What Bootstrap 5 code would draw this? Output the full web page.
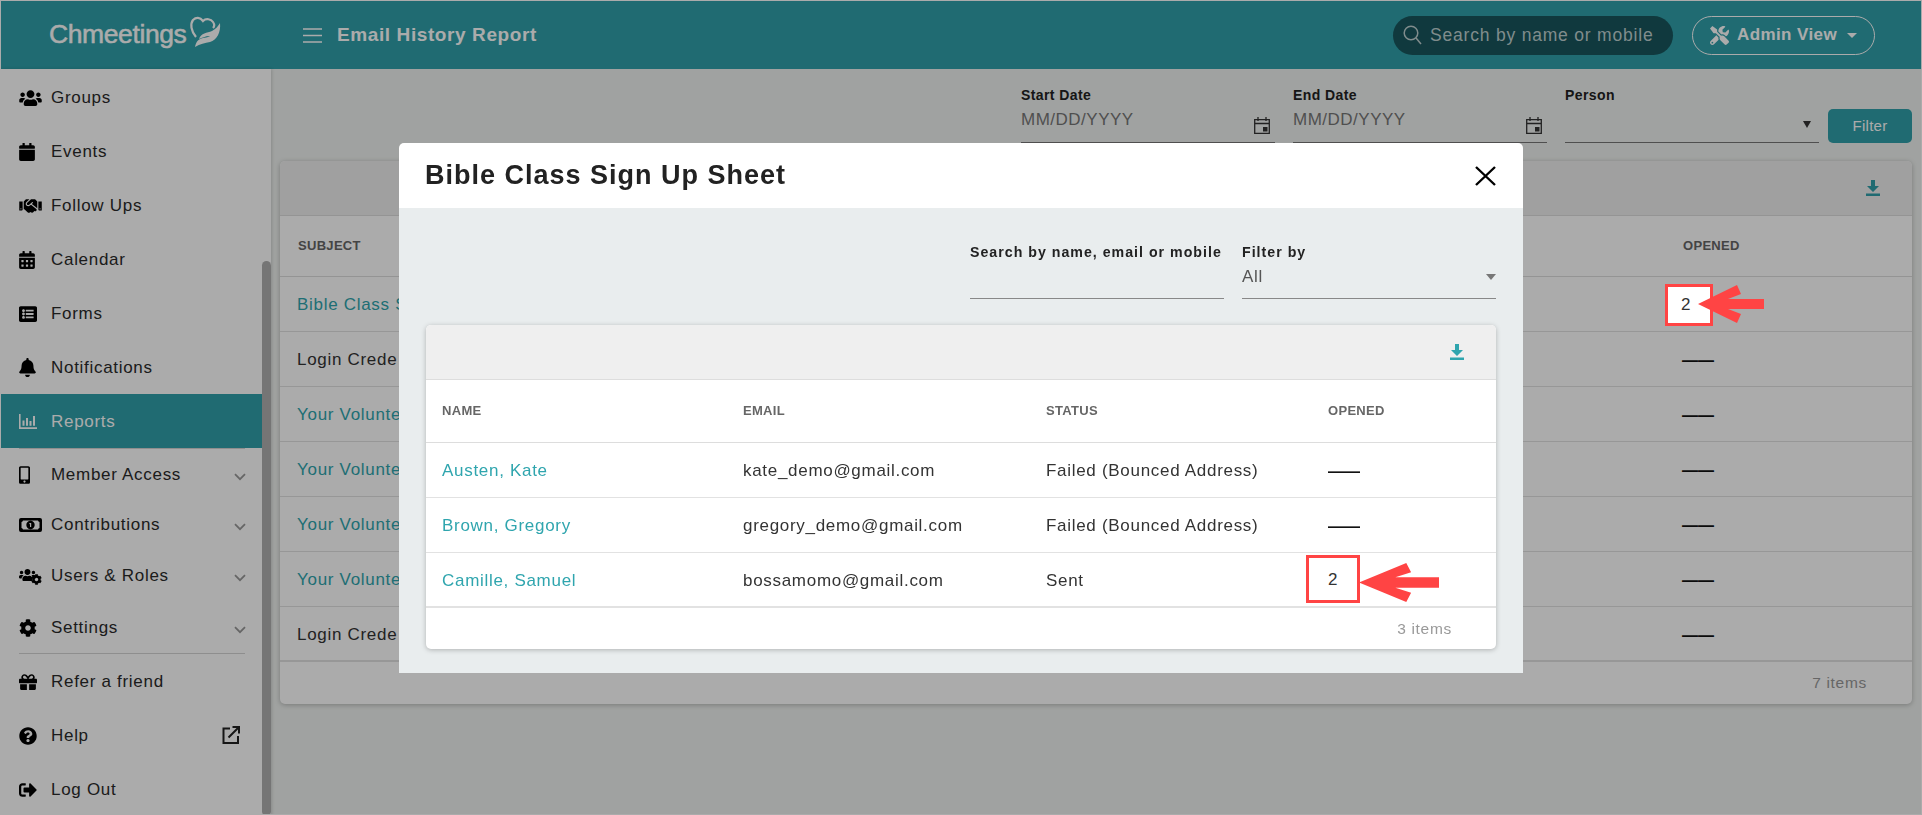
<!DOCTYPE html>
<html lang="en">
<head>
    <meta charset="UTF-8">
    <meta name="viewport" content="width=device-width, initial-scale=1.0">
    <title>Email History Report</title>
    <link href="https://cdn.jsdelivr.net/npm/bootstrap@5.3.0/dist/css/bootstrap.min.css" rel="stylesheet">
    <style>
        html, body { height: 100%; overflow: hidden; }
        body {
            background: #eff2f0;
            color: #333;
            font-family: "Liberation Sans", Arial, sans-serif;
            font-size: 17px;
            letter-spacing: .7px;
            border: 1px solid #fff;
            position: relative;
        }
        .app-top { height: 68px; background: #30a0aa; color: #fff; }
        .app-logo { width: 270px; padding-left: 48px; font-size: 26.5px; letter-spacing: -.4px; -webkit-text-stroke: .5px #fff; }
        .app-logo svg { margin-left: 3px; margin-top: -8px; }
        .app-title { font-size: 19px; font-weight: 700; margin-left: 15px; letter-spacing: .6px; }
        .app-burger { margin-left: 32px; }
        .app-search {
            width: 280px; height: 39px; background: #18555d; border-radius: 20px;
            padding-left: 10px; margin-right: 19px; gap: 8px;
        }
        .app-search input {
            background: none; border: 0; outline: 0; width: 240px; color: #fff;
            font-size: 17.5px; letter-spacing: .8px; padding: 0;
        }
        .app-search input::placeholder { color: #bfd1d1; opacity: 1; }
        .app-admin {
            width: 183px; height: 39px; border: 1px solid #fff; border-radius: 20px; color: #fff;
            font-size: 17px; font-weight: 700; margin-right: 46px; gap: 8px; letter-spacing: .4px;
        }
        .app-caret { border-left: 5px solid transparent; border-right: 5px solid transparent; border-top: 5px solid #fff; margin-left: 2px; }

        .app-side { width: 270px; background: #fff; position: relative; flex: none; box-shadow: 1px 0 3px rgba(0,0,0,.15); }
        .app-thumb { position: absolute; left: 261px; top: 192px; bottom: 0; width: 9px; background: #afafaf; border-radius: 5px; }
        .side-list { width: 261px; padding-top: 1px; }
        .side-item { height: 54px; color: #2b2b2b; padding-left: 18px; padding-top: 1px; }
        .side-item.short { height: 50px; }
        .side-item.mid { height: 52px; }
        .side-item.on { background: #30a0aa; color: #fff; }
        .side-ico { width: 32px; flex: none; display: flex; }
        .side-chev { position: absolute; right: 16px; top: 50%; margin-top: -1px; }
        .side-link { position: absolute; right: 22px; top: 18px; }
        .side-rule { height: 1px; background: #d4d4d4; margin: 0 17px 0 18px; }

        .app-main { padding: 17px 9px 0 9px; min-width: 0; }
        .flt-row { gap: 18px; }
        .flt-field { width: 254px; height: 57px; border-bottom: 1px solid #777; position: relative; }
        .flt-label { font-size: 14px; font-weight: 700; color: #222; line-height: 18px; display: block; letter-spacing: .4px; }
        .flt-value { font-size: 17px; color: #777; margin-top: 4px; line-height: 24px; letter-spacing: .5px; }
        .flt-ico { position: absolute; right: 5px; top: 31px; }
        .flt-drop { position: absolute; right: 8px; top: 35px; border-left: 4px solid transparent; border-right: 4px solid transparent; border-top: 7px solid #333; }
        .flt-btn {
            background: #30a0aa; color: #fff; border: 0; width: 84px; height: 34px; border-radius: 5px;
            font-size: 15px; margin-left: -9px; align-self: flex-end; padding: 0; letter-spacing: .3px;
        }

        .rpt-box { border: 0; border-radius: 5px; box-shadow: 0 1px 5px rgba(0,0,0,.25); background: #fff; }
        .app-main .rpt-box { margin-top: 18px; }
        .rpt-head { height: 55px; background: #efefef; border-radius: 5px 5px 0 0; border-bottom: 1px solid #ddd; padding-right: 32px; }
        .rpt-grid { margin: 0; table-layout: fixed; width: 100%; }
        .rpt-grid > thead th {
            height: 60px; font-size: 13px; font-weight: 700; color: #666; padding: 0 18px; vertical-align: middle;
            border-bottom: 1px solid #ddd; letter-spacing: .3px;
        }
        .inner-grid > thead th { height: 62px; }
        .rpt-grid > tbody td { height: 55px; padding: 2px 18px 0 17px; vertical-align: middle; border-bottom: 1px solid #e2e2e2; color: #333; background: none; }
        .rpt-grid > tbody tr:last-child td { border-bottom: 2px solid #e2e2e2; }
        .rpt-link { color: #2fa5ae; text-decoration: none; }
        .rpt-dash { font-weight: 700; font-size: 16px; color: #111; letter-spacing: 0; vertical-align: -2px; }
        .rpt-foot { height: 42px; padding-right: 45px; font-size: 15.5px; color: #999; }
        .inner-grid + .rpt-foot { height: 41px; padding-right: 44px; }

        .pop-dialog { max-width: 1124px; width: 1124px; margin: 143px auto 0; }
        .pop-content { border: 0; border-radius: 5px 5px 0 0; }
        .pop-head { height: 65px; padding: 0 27px 0 26px; border: 0; }
        .pop-title { font-size: 27px; font-weight: 700; color: #222; letter-spacing: 1px; margin: 0; }
        .pop-close { background: none; border: 0; padding: 0; line-height: 0; }
        .pop-body { background: #e9edee; padding: 31px 27px 24px; }
        .pop-flt { gap: 18px; height: 60px; margin-bottom: 26px; }
        .pop-field { width: 254px; height: 60px; padding-top: 2px; border-bottom: 1px solid #888; position: relative; }
        .pop-label { font-size: 14.2px; font-weight: 700; color: #222; line-height: 22px; display: block; letter-spacing: 1px; white-space: nowrap; }
        .pop-value { font-size: 17px; color: #555; line-height: 24px; margin-top: 2px; }
        .pop-drop { position: absolute; right: 0; top: 35px; border-left: 5.5px solid transparent; border-right: 5.5px solid transparent; border-top: 6px solid #777; }

        .mark-box {
            position: absolute; border: 3px solid #ff4444; background: #fff; color: #333;
            display: flex; align-items: center; justify-content: center; z-index: 1060;
        }
        .mark-arrow { position: absolute; z-index: 1061; }
        .mark-top { left: 1664px; top: 283px; width: 48px; height: 42px; padding-right: 6px; }
        .mark-top-arrow { left: 1697px; top: 284px; }
        .mark-cell { position: relative; }
        .mark-low { left: -22px; top: -25px; width: 54px; height: 48px; }
        .mark-low-arrow { left: 31px; top: -17px; }
    </style>
</head>
<body>
    <svg class="d-none">
        <symbol id="i-users" viewBox="0 0 640 512"><path d="M96 224c35.3 0 64-28.7 64-64s-28.7-64-64-64-64 28.7-64 64 28.7 64 64 64zm448 0c35.3 0 64-28.7 64-64s-28.7-64-64-64-64 28.7-64 64 28.7 64 64 64zm32 32h-64c-17.6 0-33.5 7.1-45.1 18.6 40.3 22.1 68.9 62 75.1 109.4h66c17.7 0 32-14.3 32-32v-32c0-35.3-28.7-64-64-64zm-256 0c61.9 0 112-50.1 112-112S381.9 32 320 32 208 82.1 208 144s50.1 112 112 112zm76.8 32h-8.3c-20.8 10-43.9 16-68.5 16s-47.6-6-68.5-16h-8.3C179.6 288 128 339.6 128 403.2V432c0 26.5 21.5 48 48 48h288c26.5 0 48-21.5 48-48v-28.8c0-63.6-51.6-115.2-115.2-115.2zm-223.7-13.4C161.5 263.1 145.6 256 128 256H64c-35.3 0-64 28.7-64 64v32c0 17.7 14.3 32 32 32h65.9c6.3-47.4 34.9-87.3 75.2-109.4z"/></symbol>
        <symbol id="i-cal" viewBox="0 0 448 512"><path d="M12 192h424c6.6 0 12 5.4 12 12v260c0 26.5-21.5 48-48 48H48c-26.5 0-48-21.5-48-48V204c0-6.6 5.4-12 12-12zm436-44v-36c0-26.5-21.5-48-48-48h-48V12c0-6.6-5.4-12-12-12h-40c-6.6 0-12 5.4-12 12v52H160V12c0-6.6-5.4-12-12-12h-40c-6.6 0-12 5.4-12 12v52H48C21.5 64 0 85.5 0 112v36c0 6.6 5.4 12 12 12h424c6.6 0 12-5.4 12-12z"/></symbol>
        <symbol id="i-hands" viewBox="0 0 640 512"><path d="M434.7 64h-85.9c-8 0-15.7 3-21.6 8.4l-98.3 90c-.1.1-.2.3-.3.4-16.6 15.6-16.3 40.5-2.1 56 12.7 13.9 39.4 17.6 56.1 2.7.1-.1.3-.1.4-.2l79.9-73.2c6.5-5.9 16.7-5.5 22.6 1 6 6.5 5.5 16.6-1 22.6l-26.1 23.9L504 313.8c2.9 2.4 5.5 5 7.9 7.7V128l-54.6-54.6c-5.9-6-14.1-9.4-22.6-9.4zM544 128.2v223.9c0 17.7 14.3 32 32 32h64V128.2h-96zm48 223.9c-8.8 0-16-7.2-16-16s7.2-16 16-16 16 7.2 16 16-7.2 16-16 16zM0 384h64c17.7 0 32-14.3 32-32V128.2H0V384zm48-63.9c8.8 0 16 7.2 16 16s-7.2 16-16 16-16-7.2-16-16c0-8.9 7.2-16 16-16zm435.9 18.6L334.6 217.5l-30 27.5c-29.7 27.1-75.2 24.5-101.7-4.4-26.9-29.4-24.8-74.9 4.4-101.7L289.1 64h-83.8c-8.5 0-16.6 3.4-22.6 9.4L128 128v223.9h18.3l90.5 81.9c27.4 22.3 67.7 18.1 90-9.3l.2-.2 17.9 15.5c15.9 13 39.4 10.5 52.3-5.4l31.4-38.6 5.4 4.4c13.7 11.1 33.9 9.1 45-4.7l9.5-11.7c11.2-13.8 9.1-33.9-4.6-45.1z"/></symbol>
        <symbol id="i-calalt" viewBox="0 0 448 512"><path d="M0 464c0 26.5 21.5 48 48 48h352c26.5 0 48-21.5 48-48V192H0v272zm320-196c0-6.6 5.4-12 12-12h40c6.6 0 12 5.4 12 12v40c0 6.6-5.4 12-12 12h-40c-6.6 0-12-5.4-12-12v-40zm0 128c0-6.6 5.4-12 12-12h40c6.6 0 12 5.4 12 12v40c0 6.6-5.4 12-12 12h-40c-6.6 0-12-5.4-12-12v-40zM192 268c0-6.6 5.4-12 12-12h40c6.6 0 12 5.4 12 12v40c0 6.6-5.4 12-12 12h-40c-6.6 0-12-5.4-12-12v-40zm0 128c0-6.6 5.4-12 12-12h40c6.6 0 12 5.4 12 12v40c0 6.6-5.4 12-12 12h-40c-6.6 0-12-5.4-12-12v-40zM64 268c0-6.6 5.4-12 12-12h40c6.6 0 12 5.4 12 12v40c0 6.6-5.4 12-12 12H76c-6.6 0-12-5.4-12-12v-40zm0 128c0-6.6 5.4-12 12-12h40c6.6 0 12 5.4 12 12v40c0 6.6-5.4 12-12 12H76c-6.6 0-12-5.4-12-12v-40zM400 64h-48V16c0-8.8-7.2-16-16-16h-32c-8.8 0-16 7.2-16 16v48H160V16c0-8.8-7.2-16-16-16h-32c-8.8 0-16 7.2-16 16v48H48C21.5 64 0 85.5 0 112v48h448v-48c0-26.5-21.5-48-48-48z"/></symbol>
        <symbol id="i-list" viewBox="0 0 512 512"><path d="M464 480H48c-26.51 0-48-21.49-48-48V80c0-26.51 21.49-48 48-48h416c26.51 0 48 21.49 48 48v352c0 26.51-21.49 48-48 48zM128 120c-22.091 0-40 17.909-40 40s17.909 40 40 40 40-17.909 40-40-17.909-40-40-40zm0 96c-22.091 0-40 17.909-40 40s17.909 40 40 40 40-17.909 40-40-17.909-40-40-40zm0 96c-22.091 0-40 17.909-40 40s17.909 40 40 40 40-17.909 40-40-17.909-40-40-40zm288-136v-32c0-6.627-5.373-12-12-12H204c-6.627 0-12 5.373-12 12v32c0 6.627 5.373 12 12 12h200c6.627 0 12-5.373 12-12zm0 96v-32c0-6.627-5.373-12-12-12H204c-6.627 0-12 5.373-12 12v32c0 6.627 5.373 12 12 12h200c6.627 0 12-5.373 12-12zm0 96v-32c0-6.627-5.373-12-12-12H204c-6.627 0-12 5.373-12 12v32c0 6.627 5.373 12 12 12h200c6.627 0 12-5.373 12-12z"/></symbol>
        <symbol id="i-bell" viewBox="0 0 448 512"><path d="M224 512c35.32 0 63.97-28.65 63.97-64H160.03c0 35.35 28.65 64 63.97 64zm215.39-149.71c-19.32-20.76-55.47-51.99-55.47-154.29 0-77.7-54.48-139.9-127.94-155.16V32c0-17.67-14.32-32-31.98-32s-31.98 14.33-31.98 32v20.84C118.56 68.1 64.08 130.3 64.08 208c0 102.3-36.15 133.53-55.47 154.29-6 6.45-8.66 14.16-8.61 21.71.11 16.4 12.98 32 32.1 32h383.8c19.12 0 32-15.6 32.1-32 .05-7.55-2.61-15.27-8.61-21.71z"/></symbol>
        <symbol id="i-bars" viewBox="0 0 18 15"><path d="M0 0h1.6v13.2H18V15H0zM3.5 6.5h2v5.2h-2zM7 4h2v7.7H7zM10.5 7h2v4.7h-2zM14 2h2v9.7h-2z"/></symbol>
        <symbol id="i-phone" viewBox="0 0 320 512"><path d="M272 0H48C21.5 0 0 21.5 0 48v416c0 26.5 21.5 48 48 48h224c26.5 0 48-21.5 48-48V48c0-26.5-21.5-48-48-48zM160 480c-17.7 0-32-14.3-32-32s14.3-32 32-32 32 14.3 32 32-14.3 32-32 32zm112-108c0 6.6-5.4 12-12 12H60c-6.6 0-12-5.4-12-12V60c0-6.6 5.4-12 12-12h200c6.6 0 12 5.4 12 12v312z"/></symbol>
        <symbol id="i-money" viewBox="0 0 23 14"><path fill-rule="evenodd" d="M2 0h19a2 2 0 0 1 2 2v10a2 2 0 0 1-2 2H2a2 2 0 0 1-2-2V2a2 2 0 0 1 2-2zm2 2.5a2 2 0 0 1-1.5 1.5v6A2 2 0 0 1 4 11.500h15a2 2 0 0 1 1.500-1.500V4A2 2 0 0 1 19 2.500zM11.500 2.800a4.200 4.200 0 1 0 0 8.400 4.200 4.200 0 0 0 0-8.400zM11 5h1.200v4H11V6l-.8.3V5.500z"/></symbol>
        <symbol id="i-cog" viewBox="0 0 512 512"><path d="M487.4 315.7l-42.6-24.6c4.3-23.2 4.3-47 0-70.2l42.6-24.6c4.9-2.8 7.1-8.6 5.5-14-11.1-35.6-30-67.8-54.7-94.6-3.8-4.1-10-5.1-14.8-2.3L380.800 110c-17.900-15.400-38.500-27.300-60.800-35.100V25.800c0-5.600-3.900-10.500-9.400-11.700-36.700-8.200-74.300-7.800-109.200 0-5.500 1.200-9.400 6.100-9.400 11.700V75c-22.200 7.900-42.800 19.800-60.800 35.100L88.700 85.500c-4.900-2.800-11-1.900-14.800 2.300-24.700 26.700-43.600 58.900-54.700 94.600-1.700 5.400.6 11.200 5.500 14L67.300 221c-4.300 23.200-4.300 47 0 70.200l-42.600 24.600c-4.900 2.800-7.100 8.600-5.500 14 11.100 35.600 30 67.800 54.700 94.600 3.800 4.100 10 5.100 14.800 2.300l42.600-24.600c17.900 15.400 38.500 27.300 60.800 35.100v49.200c0 5.600 3.900 10.500 9.400 11.700 36.700 8.200 74.300 7.800 109.200 0 5.500-1.200 9.400-6.100 9.400-11.700v-49.200c22.200-7.900 42.800-19.800 60.800-35.100l42.600 24.600c4.900 2.800 11 1.900 14.800-2.300 24.700-26.700 43.600-58.900 54.700-94.600 1.500-5.500-.7-11.300-5.600-14.100zM256 336c-44.100 0-80-35.900-80-80s35.900-80 80-80 80 35.900 80 80-35.900 80-80 80z"/></symbol>
        <symbol id="i-gift" viewBox="0 0 512 512"><path d="M32 448c0 17.700 14.300 32 32 32h160V320H32v128zm256 32h160c17.700 0 32-14.300 32-32V320H288v160zm192-320h-42.100c6.200-12.100 10.100-25.500 10.100-40 0-48.500-39.500-88-88-88-41.600 0-68.500 21.300-103 68.300-34.500-47-61.400-68.300-103-68.300-48.500 0-88 39.500-88 88 0 14.500 3.800 27.900 10.100 40H32c-17.700 0-32 14.300-32 32v80c0 8.800 7.200 16 16 16h480c8.800 0 16-7.200 16-16v-80c0-17.700-14.300-32-32-32zm-326.100 0c-22.100 0-40-17.900-40-40s17.900-40 40-40c19.900 0 34.600 3.300 86.100 80h-86.100zm206.100 0h-86.100c51.400-76.500 65.700-80 86.100-80 22.100 0 40 17.900 40 40s-17.900 40-40 40z"/></symbol>
        <symbol id="i-help" viewBox="0 0 512 512"><path d="M504 256c0 136.997-111.043 248-248 248S8 392.997 8 256C8 119.083 119.043 8 256 8s248 111.083 248 248zM262.655 90c-54.497 0-89.255 22.957-116.549 63.758-3.536 5.286-2.353 12.415 2.715 16.258l34.699 26.310c5.205 3.947 12.621 3.008 16.665-2.122 17.864-22.658 30.113-35.797 57.303-35.797 20.429 0 45.698 13.148 45.698 32.958 0 14.976-12.363 22.667-32.534 33.976C247.128 238.528 216 254.941 216 296v4c0 6.627 5.373 12 12 12h56c6.627 0 12-5.373 12-12v-1.333c0-28.462 83.186-29.647 83.186-106.667 0-58.002-60.165-102-116.531-102zM256 338c-25.365 0-46 20.635-46 46 0 25.364 20.635 46 46 46s46-20.636 46-46c0-25.365-20.635-46-46-46z"/></symbol>
        <symbol id="i-out" viewBox="0 0 512 512"><path d="M497 273L329 441c-15 15-41 4.500-41-17v-96H152c-13.300 0-24-10.700-24-24v-96c0-13.300 10.700-24 24-24h136V88c0-21.400 25.900-32 41-17l168 168c9.300 9.400 9.300 24.600 0 34zM192 436v-40c0-6.600-5.400-12-12-12H96c-17.700 0-32-14.300-32-32V160c0-17.700 14.300-32 32-32h84c6.600 0 12-5.400 12-12V76c0-6.600-5.400-12-12-12H96c-53 0-96 43-96 96v192c0 53 43 96 96 96h84c6.600 0 12-5.400 12-12z"/></symbol>
        <symbol id="i-tools" viewBox="0 0 512 512"><path d="M501.100 395.700L384 278.600c-23.100-23.100-57.600-27.600-85.400-13.900L192 158.100V96L64 0 0 64l96 128h62.100l106.600 106.600c-13.600 27.800-9.200 62.300 13.900 85.400l117.100 117.100c14.600 14.600 38.200 14.600 52.700 0l52.700-52.700c14.500-14.600 14.500-38.200 0-52.700zM331.700 225c28.300 0 54.900 11 74.900 31l19.400 19.400c15.800-6.900 30.800-16.500 43.800-29.500 37.100-37.100 49.700-89.300 37.900-136.700-2.200-9-13.500-12.100-20.100-5.500l-74.400 74.400-67.900-11.300L334 98.900l74.400-74.400c6.600-6.600 3.400-17.900-5.700-20.200-47.400-11.700-99.600.9-136.600 37.900-28.500 28.500-41.900 66.100-41.200 103.600l82.100 82.100c8.100-1.900 16.500-2.900 24.700-2.900zm-103.900 82l-56.700-56.700L18.700 402.800c-25 25-25 65.500 0 90.500s65.500 25 90.500 0l123.600-123.600c-7.600-19.900-9.900-41.600-5-62.700zM64 472c-13.200 0-24-10.800-24-24 0-13.300 10.700-24 24-24s24 10.700 24 24c0 13.200-10.700 24-24 24z"/></symbol>
        <symbol id="i-down" viewBox="0 0 14 16"><path d="M5 0h4v6h4L7 12 1 6h4zM0 13.500h14V16H0z"/></symbol>
        <symbol id="i-date" viewBox="0 0 16 17"><path fill="none" stroke="currentColor" stroke-width="1.300" d="M.7 2.700h14.600v13.600H.7zM.7 6.500h14.600M4 0v4M12 0v4"/><path d="M9 10h4.500v4.500H9z"/></symbol>
        <symbol id="i-chev" viewBox="0 0 12 8"><path fill="none" stroke="currentColor" stroke-width="1.800" d="M1 1.200l5 5 5-5"/></symbol>
        <symbol id="i-point" viewBox="0 0 66 38" preserveAspectRatio="none"><path d="M0 19 39 0l4 9-13 5h36v10H30l13 5-4 9z"/></symbol>
    </svg>

    <header class="app-top d-flex align-items-center">
        <div class="app-logo d-flex align-items-center">
            <span>Chmeetings</span>
            <svg width="33" height="33" viewBox="0 0 33 33">
                <path fill="none" stroke="#fff" stroke-width="2.200" d="M7 22C2 16 1 9 4 5c3-3 7-3 10 1 3-3 8-2 10 1 2 3 1 5 0 6"/>
                <path fill="#fff" d="M31 8c1 9-3 17-10 19-5 1-10 2-15 5 1-5 3-8 8-9 5-1 6-1 7-2-5 0-8 2-11 3 2-6 8-6 13-8 4-2 6-5 8-8z"/>
            </svg>
        </div>
        <svg class="app-burger" width="19" height="15" viewBox="0 0 19 15" stroke="#fff" stroke-width="1.600"><path d="M0 1h19M0 7.500h19M0 14h19"/></svg>
        <div class="app-title">Email History Report</div>
        <div class="ms-auto d-flex align-items-center">
            <div class="app-search d-flex align-items-center">
                <svg width="19" height="20" viewBox="0 0 19 20" fill="none" stroke="#bfd1d1" stroke-width="1.500"><circle cx="8" cy="8" r="6.800"/><path d="M13 13l5 6"/></svg>
                <input type="text" placeholder="Search by name or mobile">
            </div>
            <div class="app-admin d-flex align-items-center justify-content-center">
                <svg width="19" height="19" fill="#fff"><use href="#i-tools"/></svg>
                <span>Admin View</span>
                <span class="app-caret"></span>
            </div>
        </div>
    </header>

    <div class="d-flex">
        <aside class="app-side">
            <div class="side-list">
                <div class="side-item d-flex align-items-center"><span class="side-ico"><svg width="23" height="18"><use href="#i-users"/></svg></span>Groups</div>
                <div class="side-item d-flex align-items-center"><span class="side-ico"><svg width="16" height="18"><use href="#i-cal"/></svg></span>Events</div>
                <div class="side-item d-flex align-items-center"><span class="side-ico"><svg width="23" height="18"><use href="#i-hands"/></svg></span>Follow Ups</div>
                <div class="side-item d-flex align-items-center"><span class="side-ico"><svg width="16" height="18"><use href="#i-calalt"/></svg></span>Calendar</div>
                <div class="side-item d-flex align-items-center"><span class="side-ico"><svg width="18" height="18"><use href="#i-list"/></svg></span>Forms</div>
                <div class="side-item d-flex align-items-center"><span class="side-ico"><svg width="17" height="19"><use href="#i-bell"/></svg></span>Notifications</div>
                <div class="side-item on d-flex align-items-center"><span class="side-ico"><svg width="18" height="15" fill="#fff"><use href="#i-bars"/></svg></span>Reports</div>
                <div class="side-rule"></div>
                <div class="side-item short position-relative d-flex align-items-center"><span class="side-ico"><svg width="11" height="18"><use href="#i-phone"/></svg></span>Member Access<svg class="side-chev" width="12" height="8" color="#999"><use href="#i-chev"/></svg></div>
                <div class="side-item short position-relative d-flex align-items-center"><span class="side-ico"><svg width="23" height="14"><use href="#i-money"/></svg></span>Contributions<svg class="side-chev" width="12" height="8" color="#999"><use href="#i-chev"/></svg></div>
                <div class="side-item mid position-relative d-flex align-items-center"><span class="side-ico"><span class="position-relative d-block" style="width:23px;height:18px"><svg width="17" height="16" class="position-absolute top-0 start-0"><use href="#i-users"/></svg><svg width="11" height="11" class="position-absolute bottom-0 end-0"><use href="#i-cog"/></svg></span></span>Users &amp; Roles<svg class="side-chev" width="12" height="8" color="#999"><use href="#i-chev"/></svg></div>
                <div class="side-item mid position-relative d-flex align-items-center"><span class="side-ico"><svg width="18" height="18"><use href="#i-cog"/></svg></span>Settings<svg class="side-chev" width="12" height="8" color="#999"><use href="#i-chev"/></svg></div>
                <div class="side-rule"></div>
                <div class="side-item d-flex align-items-center"><span class="side-ico"><svg width="18" height="18"><use href="#i-gift"/></svg></span>Refer a friend</div>
                <div class="side-item position-relative d-flex align-items-center"><span class="side-ico"><svg width="18" height="18"><use href="#i-help"/></svg></span>Help<svg class="side-link" width="18" height="18" viewBox="0 0 18 18" fill="none" stroke="#222" stroke-width="2"><path d="M8 2.500H1.500v14.500h14.500V10M6.500 11.500L16.500 1.500M10.500 1h6.500v6.500"/></svg></div>
                <div class="side-item d-flex align-items-center"><span class="side-ico"><svg width="18" height="18"><use href="#i-out"/></svg></span>Log Out</div>
            </div>
            <div class="app-thumb"></div>
        </aside>

        <main class="app-main flex-grow-1">
            <div class="flt-row d-flex justify-content-end">
                <div class="flt-field">
                    <label class="flt-label">Start Date</label>
                    <div class="flt-value">MM/DD/YYYY</div>
                    <svg class="flt-ico" width="16" height="17" color="#333" fill="#333"><use href="#i-date"/></svg>
                </div>
                <div class="flt-field">
                    <label class="flt-label">End Date</label>
                    <div class="flt-value">MM/DD/YYYY</div>
                    <svg class="flt-ico" width="16" height="17" color="#333" fill="#333"><use href="#i-date"/></svg>
                </div>
                <div class="flt-field">
                    <label class="flt-label">Person</label>
                    <span class="flt-drop"></span>
                </div>
                <button class="flt-btn">Filter</button>
            </div>

            <div class="rpt-box card">
                <div class="rpt-head d-flex align-items-center justify-content-end">
                    <svg width="14" height="16" fill="#30a0aa"><use href="#i-down"/></svg>
                </div>
                <table class="table rpt-grid">
                    <colgroup><col><col style="width:247px"></colgroup>
                    <thead><tr><th>SUBJECT</th><th>OPENED</th></tr></thead>
                    <tbody>
                        <tr><td><a class="rpt-link" href="#">Bible Class S</a></td><td></td></tr>
                        <tr><td>Login Crede</td><td><span class="rpt-dash">——</span></td></tr>
                        <tr><td><a class="rpt-link" href="#">Your Volunte</a></td><td><span class="rpt-dash">——</span></td></tr>
                        <tr><td><a class="rpt-link" href="#">Your Volunte</a></td><td><span class="rpt-dash">——</span></td></tr>
                        <tr><td><a class="rpt-link" href="#">Your Volunte</a></td><td><span class="rpt-dash">——</span></td></tr>
                        <tr><td><a class="rpt-link" href="#">Your Volunte</a></td><td><span class="rpt-dash">——</span></td></tr>
                        <tr><td>Login Crede</td><td><span class="rpt-dash">——</span></td></tr>
                    </tbody>
                </table>
                <div class="rpt-foot d-flex align-items-center justify-content-end">7 items</div>
            </div>
        </main>
    </div>

    <div class="modal-backdrop show" style="--bs-backdrop-opacity:.33"></div>

    <div class="modal d-block">
        <div class="modal-dialog pop-dialog">
            <div class="modal-content pop-content">
                <div class="modal-header pop-head d-flex align-items-center justify-content-between">
                    <h5 class="pop-title">Bible Class Sign Up Sheet</h5>
                    <button class="pop-close" type="button" aria-label="Close">
                        <svg width="21" height="20" viewBox="0 0 21 20" stroke="#000" stroke-width="2.400"><path d="M1 1l19 18M20 1L1 19"/></svg>
                    </button>
                </div>
                <div class="modal-body pop-body">
                    <div class="pop-flt d-flex justify-content-end">
                        <div class="pop-field"><label class="pop-label">Search by name, email or mobile</label></div>
                        <div class="pop-field">
                            <label class="pop-label">Filter by</label>
                            <div class="pop-value">All</div>
                            <span class="pop-drop"></span>
                        </div>
                    </div>
                    <div class="rpt-box card">
                        <div class="rpt-head d-flex align-items-center justify-content-end">
                            <svg width="14" height="16" fill="#2fa5ae"><use href="#i-down"/></svg>
                        </div>
                        <table class="table rpt-grid inner-grid">
                            <colgroup><col style="width:301px"><col style="width:303px"><col style="width:282px"><col></colgroup>
                            <thead><tr><th class="px-3">NAME</th><th class="px-3">EMAIL</th><th class="px-3">STATUS</th><th class="px-3">OPENED</th></tr></thead>
                            <tbody>
                                <tr><td class="px-3"><a class="rpt-link" href="#">Austen, Kate</a></td><td class="px-3">kate_demo@gmail.com</td><td class="px-3">Failed (Bounced Address)</td><td class="px-3"><span class="rpt-dash">——</span></td></tr>
                                <tr><td class="px-3"><a class="rpt-link" href="#">Brown, Gregory</a></td><td class="px-3">gregory_demo@gmail.com</td><td class="px-3">Failed (Bounced Address)</td><td class="px-3"><span class="rpt-dash">——</span></td></tr>
                                <tr><td class="px-3"><a class="rpt-link" href="#">Camille, Samuel</a></td><td class="px-3">bossamomo@gmail.com</td><td class="px-3">Sent</td>
                                    <td class="px-3"><span class="mark-cell d-block">
                                        <span class="mark-box mark-low">2</span>
                                        <svg class="mark-arrow mark-low-arrow" width="80" height="39" fill="#ff4444"><use href="#i-point"/></svg>
                                    </span></td></tr>
                            </tbody>
                        </table>
                        <div class="rpt-foot d-flex align-items-center justify-content-end">3 items</div>
                    </div>
                </div>
            </div>
        </div>
    </div>

    <div class="mark-box mark-top">2</div>
    <svg class="mark-arrow mark-top-arrow" width="66" height="38" fill="#ff4444"><use href="#i-point"/></svg>

    <script src="https://cdn.jsdelivr.net/npm/bootstrap@5.3.0/dist/js/bootstrap.bundle.min.js"></script>
</body>
</html>
